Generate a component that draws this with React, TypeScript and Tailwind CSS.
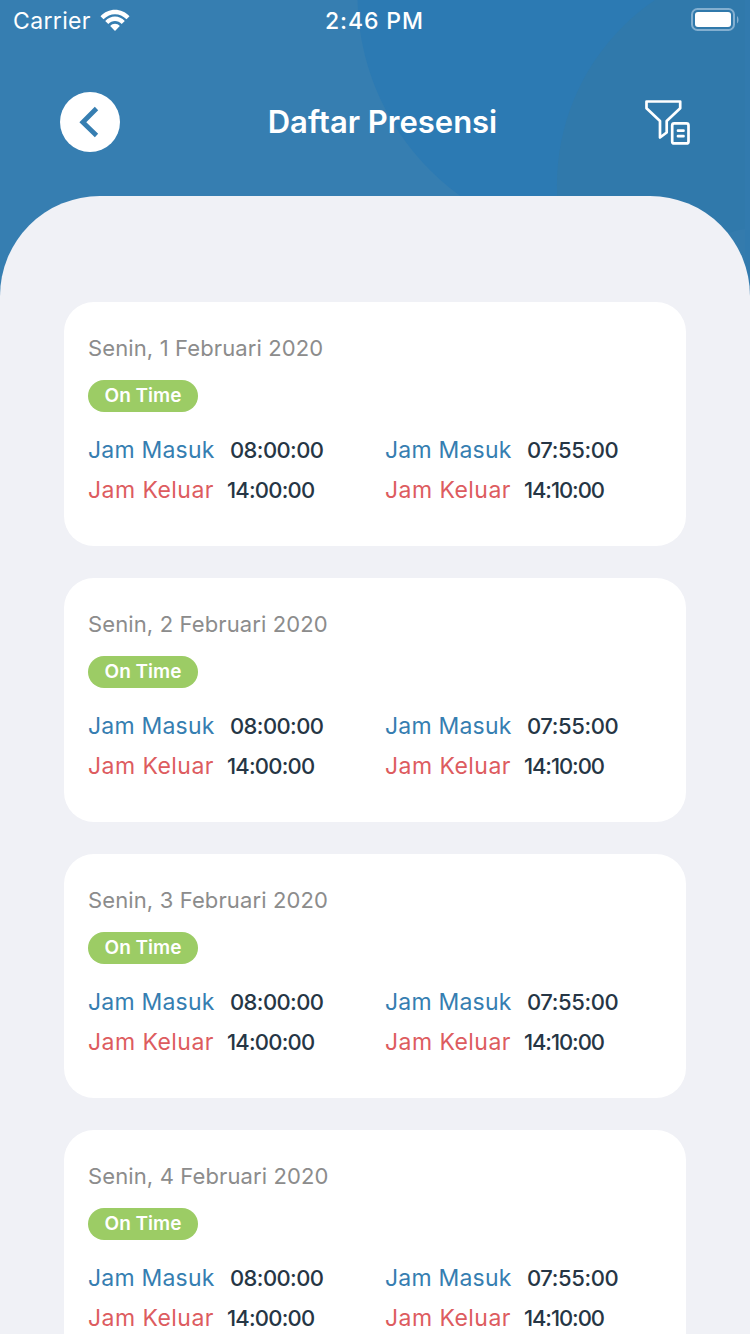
import React from "react";

const dates = ["Senin, 1 Februari 2020", "Senin, 2 Februari 2020", "Senin, 3 Februari 2020", "Senin, 4 Februari 2020"];

function Times({ children }: { children: React.ReactNode }) {
  return (
    <div className="flex w-[297px] shrink-0 flex-col whitespace-nowrap text-[22px] leading-[40px]">
      {children}
    </div>
  );
}

function Masuk({ time, spacing }: { time: string; spacing: string }) {
  return (
    <div className="flex h-10">
      <span className="w-[142px] text-[23px] tracking-[0.2px] text-[#367eb1]">Jam Masuk</span>
      <span className={`font-medium text-[#263645] ${spacing}`}>{time}</span>
    </div>
  );
}

function Keluar({ time, spacing }: { time: string; spacing: string }) {
  return (
    <div className="flex h-10">
      <span className="w-[139px] text-[23px] tracking-[0.45px] text-[#dd5c5f]">Jam Keluar</span>
      <span className={`font-medium text-[#263645] ${spacing}`}>{time}</span>
    </div>
  );
}

function Card({ date }: { date: string }) {
  return (
    <article className="h-[244px] shrink-0 rounded-[30px] bg-white px-6 pt-[30px]">
      <div className="flex h-8 items-center whitespace-nowrap text-[22px] tracking-[0.12px] text-[#8c8c8c]">
        <span>{date}</span>
      </div>
      <div className="mt-4 h-8 w-[110px] rounded-full bg-[#9ccc65] text-center">
        <span className="block whitespace-nowrap text-[19px] font-semibold leading-[31px] text-white">On Time</span>
      </div>
      <div className="mt-[18px] flex">
        <Times>
          <Masuk time="08:00:00" spacing="tracking-[-0.6px]" />
          <Keluar time="14:00:00" spacing="tracking-[-0.8px]" />
        </Times>
        <Times>
          <Masuk time="07:55:00" spacing="tracking-[-0.4px]" />
          <Keluar time="14:10:00" spacing="tracking-[-1.1px]" />
        </Times>
      </div>
    </article>
  );
}

export default function App() {
  return (
    <div className="relative flex h-[1334px] w-[750px] flex-col overflow-hidden bg-[#367eb1] font-['Inter',sans-serif]">
      <svg className="absolute left-0 top-0" width="750" height="300" viewBox="0 0 750 300">
        <defs><clipPath id="bubbles"><rect width="745" height="300" /></clipPath></defs>
        <rect x="745" width="5" height="300" fill="#317aae" />
        <g clipPath="url(#bubbles)">
          <circle cx="605.5" cy="-5" r="248" fill="#2c7ab3" />
          <circle cx="780.5" cy="185" r="223.6" fill="#3079ab" />
          <path d="M725 235Q735 230 745 229V300H725z" fill="#347bad" />
        </g>
      </svg>
      <div className="relative flex h-10 items-center justify-between pl-[13px] pr-[11px] text-white">
        <div className="flex items-center gap-[9px]">
          <span className="pt-[2px] text-[23px] tracking-[0.35px]">Carrier</span>
          <svg width="30" height="22" viewBox="0 0 30 22" fill="white">
            <path d="M.5 7.3C8.2-1.4 21.8-1.4 29.5 7.3l-3 3C20.1 3.4 9.9 3.4 3.5 10.3z" />
            <path d="M5.2 12c5.3-6 14.3-6 19.6 0l-3.1 3c-3.6-4-9.8-4-13.4 0z" />
            <path d="M10.2 17c2.5-3 7.1-3 9.6 0L15 22z" />
          </svg>
        </div>
        <span className="absolute left-[325px] pt-[2px] text-[23px] font-medium tracking-[0.9px]">2:46 PM</span>
        <svg width="48" height="24" viewBox="0 0 48 24" fill="none">
          <rect x="1" y="1" width="42" height="21" rx="5.5" stroke="#83afd0" strokeWidth="2" />
          <rect x="4" y="4" width="36" height="15" rx="3" fill="white" />
          <path d="M46 8c2 1.5 2 6 0 7.5z" fill="#83afd0" />
        </svg>
      </div>
      <header className="relative flex h-[156px] items-start justify-between pl-[60px] pr-[59px] pt-[52px] text-white">
        <button className="flex size-[60px] items-center justify-center rounded-full bg-white" aria-label="Kembali">
          <svg width="60" height="60" viewBox="0 0 60 60" fill="none" stroke="#367eb1" strokeWidth="4.8"><path d="M36.5 16.5 22.8 30.2 36.5 43.5" /></svg>
        </button>
        <h1 className="whitespace-nowrap text-[31px] font-semibold leading-[60px]">Daftar Presensi</h1>
        <svg className="mt-2" width="46" height="46" viewBox="0 0 46 46" fill="none" stroke="white" strokeWidth="2.7" strokeLinejoin="round" strokeLinecap="round">
          <path d="M1.5 1.5h33.7v6.7L21.7 21v11.5L15 37.5V21L1.5 8.2z" />
          <rect x="27.2" y="23.4" width="16.3" height="20" rx="2" />
          <path d="M33 30.7h5.5M33 36.2h5.5" />
        </svg>
      </header>
      <main className="relative flex h-[1138px] flex-col gap-8 overflow-hidden rounded-t-[100px] bg-[#f0f1f6] px-16 pt-[106px]">
        {dates.map((date) => <Card key={date} date={date} />)}
      </main>
    </div>
  );
}
